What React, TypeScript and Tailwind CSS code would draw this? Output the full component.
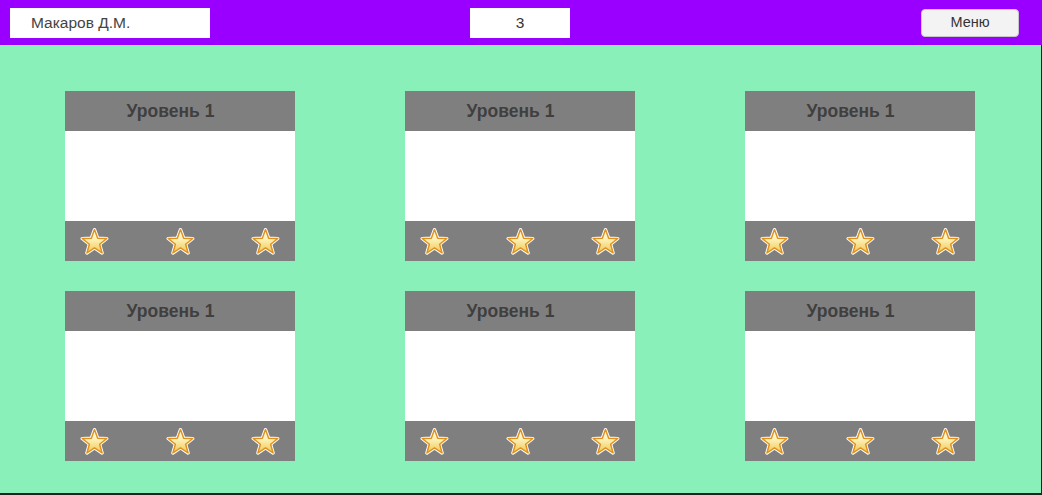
import React from 'react';

const STAR_PATH =
  'M14 2.5 L17.06 10.79 L25.89 11.14 L18.95 16.61 L21.35 25.11 L14 20.2 L6.65 25.11 L9.05 16.61 L2.11 11.14 L10.94 10.79 Z';

function Star({ id }: { id: string }) {
  return (
    <svg width="29" height="29" viewBox="0 0 28 28">
      <defs>
        <linearGradient id={id} x1="0" y1="0" x2="0" y2="1">
          <stop offset="0%" stopColor="#fffef0" />
          <stop offset="45%" stopColor="#fcefb0" />
          <stop offset="100%" stopColor="#efc654" />
        </linearGradient>
      </defs>
      <path d={STAR_PATH} fill="none" stroke="#ffffff" strokeWidth="3.2" strokeLinejoin="round" />
      <path d={STAR_PATH} fill={`url(#${id})`} stroke="#e0901c" strokeWidth="1.4" strokeLinejoin="round" />
    </svg>
  );
}

function LevelCard({ n }: { n: number }) {
  return (
    <div className="w-[230px] flex flex-col">
      <div className="h-10 bg-[#7f7f7f] flex items-center justify-center pr-[19px] text-[17.5px] font-bold text-[#3f3f3f]">
        Уровень 1
      </div>
      <div className="h-[90px] bg-white" />
      <div className="h-10 bg-[#7f7f7f] flex items-center justify-between px-[15px]">
        {[0, 1, 2].map((i) => (
          <Star key={i} id={`star-${n}-${i}`} />
        ))}
      </div>
    </div>
  );
}

export default function App() {
  return (
    <div className="w-[1042px] h-[495px] flex flex-col font-['Liberation_Sans',Arial,sans-serif]">
      <header className="h-[45px] bg-[#9900ff] flex items-center pl-[10px] pr-[12px] shrink-0">
        <div className="flex-1">
          <div className="w-[200px] h-[30px] bg-white flex items-center pl-[21px] text-[15.5px] text-[#444]">
            Макаров Д.М.
          </div>
        </div>
        <div className="w-[100px] h-[30px] bg-white flex items-center justify-center text-[15.5px] text-[#333]">
          3
        </div>
        <div className="flex-1 flex justify-end">
          <button className="w-[98px] h-[28px] mr-[11px] bg-[#f3f3f3] border border-[#c8c8c8] rounded-[4px] text-[14.5px] text-[#333]">
            Меню
          </button>
        </div>
      </header>
      <main className="flex-1 bg-[#88f0b8] border-r border-b-2 border-[#222] pt-[46px] pl-[65px]">
        <div className="grid grid-cols-[230px_230px_230px] gap-x-[110px] gap-y-[30px]">
          {[0, 1, 2, 3, 4, 5].map((n) => (
            <LevelCard key={n} n={n} />
          ))}
        </div>
      </main>
    </div>
  );
}
